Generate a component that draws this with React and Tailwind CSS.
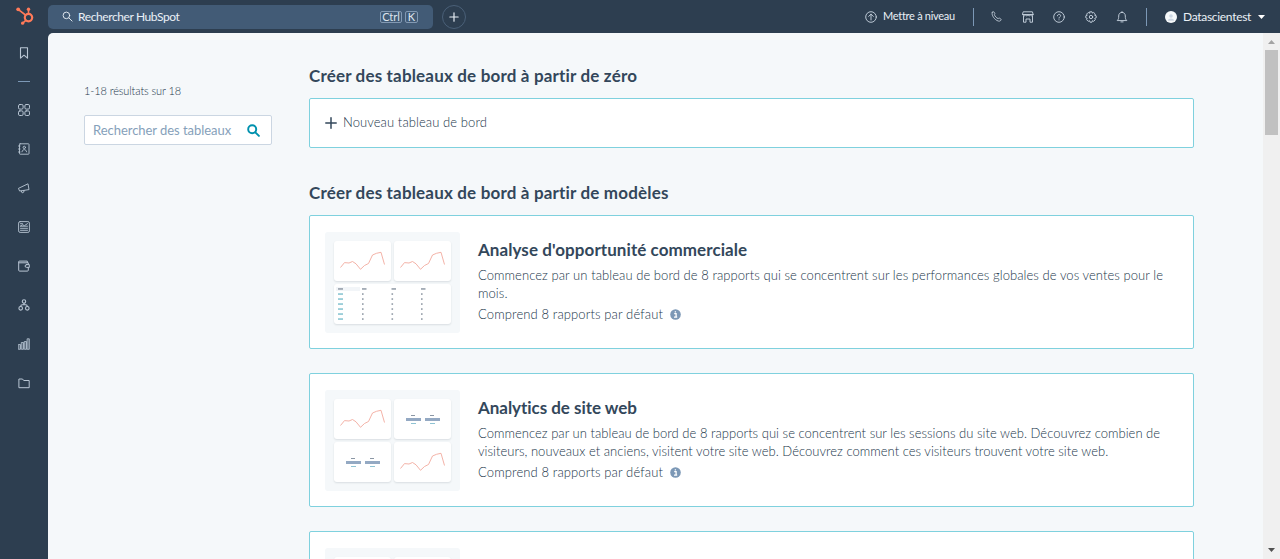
import React from "react";

const SPARK = "M0 15.5 L4 10.6 L8.5 11 L12 9.5 L15.5 11.8 L20 17.3 L24 13.5 L28 11.5 L32 3 L36 1.3 L40.5 0.3 L44 12.5";

function Icon({ children, className = "size-3", viewBox = "0 0 12 12", w = 0.9 }) {
  return (
    <svg viewBox={viewBox} className={`${className} shrink-0`} fill="none" stroke="currentColor" strokeWidth={w} strokeLinecap="round" strokeLinejoin="round">
      {children}
    </svg>
  );
}

const Bookmark = () => <Icon w={1.1}><path d="M2.500.8h7v10.400L6 8.200l-3.500 3z" /></Icon>;
const Grid = () => (
  <Icon w={1}>
    <rect x=".5" y=".5" width="4.600" height="4.600" rx="1.300" /><rect x="6.900" y=".5" width="4.600" height="4.600" rx="1.300" />
    <rect x=".5" y="6.900" width="4.600" height="4.600" rx="1.300" /><rect x="6.900" y="6.900" width="4.600" height="4.600" rx="1.300" />
  </Icon>
);
const Contacts = () => (
  <Icon>
    <rect x="1.500" y=".8" width="9.500" height="10.400" rx=".6" />
    <circle cx="6.300" cy="4.400" r="1.200" /><path d="M4 8.800c.3-3 4.300-3 4.600 0M.5 3h1.500M.5 6h1.500M.5 9h1.500" />
  </Icon>
);
const Megaphone = () => <Icon><path d="M.8 6.200 10 1.800l1 5.800-9 1.400zM3.200 8.900l1 2 1.600-.8.2-1.600" /></Icon>;
const News = () => (
  <Icon>
    <rect x=".6" y=".6" width="10.800" height="10.800" rx="1.500" />
    <path d="M2.500 2.700h2M2.500 5l2-1.200 2 .8 3-2M2.500 5.200h7M2.500 7.300h7M2.500 9.300h7" />
  </Icon>
);
const Wallet = () => (
  <Icon w={1}>
    <path d="M10.300 4.200V2.800H1.500c-1 0-1-1.700 0-1.700h7.800v1.500M.7 2v8.200c0 .6.3.9.9.9h7.800c.6 0 .9-.3.9-.9V8M8.500 4.600h2.800v2.800H8.500a1.400 1.400 0 0 1 0-2.800z" />
  </Icon>
);
const Nodes = () => (
  <Icon w={1.1}>
    <circle cx="6" cy="2.500" r="1.700" /><circle cx="2.700" cy="9.300" r="1.800" /><circle cx="9.300" cy="9.300" r="1.800" />
    <path d="M6 4.200v1.500M2.700 7.500c0-1.200.6-1.800 1.600-1.800h3.400c1 0 1.600.6 1.600 1.800" />
  </Icon>
);
const Bars = () => (
  <Icon w={0.8}>
    <g fill="currentColor" fillOpacity=".35">
      <rect x=".7" y="6.500" width="1.800" height="4.800" /><rect x="3.700" y="4.500" width="1.800" height="6.800" />
      <rect x="6.700" y="3.500" width="1.800" height="7.800" /><rect x="9.500" y=".8" width="1.800" height="10.500" />
    </g>
  </Icon>
);
const Folder = () => <Icon w={1}><path d="M.9 10.300V2h3.600l1.200 1.500h5.500v6.800z" /></Icon>;

const NAV = [Grid, Contacts, Megaphone, News, Wallet, Nodes, Bars, Folder];

function Sprocket() {
  return (
    <svg viewBox="0 0 18 18" className="ml-[2px] size-[18px]" fill="none" stroke="#ff7a59" strokeLinecap="round">
      <circle cx="12.500" cy="10.600" r="3.700" strokeWidth="2.200" />
      <path d="M12.500 6.500V2.800M9.500 8 2.800 2.800M9.800 13.300l-3 2.800" strokeWidth="1.600" />
      <g fill="#ff7a59" stroke="none">
        <circle cx="12.500" cy="2.200" r="1.700" /><circle cx="2.200" cy="2.300" r="1.900" /><circle cx="6.600" cy="16.200" r="1.600" />
      </g>
    </svg>
  );
}

function Kbd({ children, className }) {
  return (
    <span className={`flex h-3 items-center justify-center rounded-xs border border-[#8299b3] text-[11px] leading-none text-[#dfe6ee] ${className}`}>
      {children}
    </span>
  );
}

function Header() {
  return (
    <header className="flex h-[33px] shrink-0 items-center text-[#eaf0f6]">
      <div className="flex w-12 justify-center pb-px"><Sprocket /></div>
      <div className="flex h-6 w-[385px] items-center rounded-[5px] bg-[#425b76] pr-[15px] pl-3.5">
        <Icon className="size-[11px]" w={1}><circle cx="4.800" cy="4.800" r="3.600" /><path d="m7.600 7.600 3.400 3.400" /></Icon>
        <span className="ml-[5px] flex-1 text-xs tracking-[-0.400px] whitespace-nowrap">Rechercher HubSpot</span>
        <Kbd className="w-[22px]">Ctrl</Kbd>
        <Kbd className="ml-[3px] w-[13px]">K</Kbd>
      </div>
      <div className="ml-[9px] flex size-6 items-center justify-center rounded-full border border-[#4a6078]">
        <Icon className="size-[10px]" w={1.4}><path d="M6 1v10M1 6h10" /></Icon>
      </div>
      <div className="ml-auto flex items-center text-[#cbd6e2]">
        <Icon><circle cx="6" cy="6" r="5.300" /><path d="M6 9V3.200M3.700 5.400 6 3.100l2.300 2.300" /></Icon>
        <span className="ml-1.5 w-[72px] text-[11px] tracking-[-0.280px] whitespace-nowrap text-[#eaf0f6]">Mettre à niveau</span>
        <span className="ml-[18px] h-[18px] w-px bg-[#7c98b6]" />
        <div className="ml-[17px] flex items-center gap-[19.500px]">
          <Icon className="size-[11px]"><path d="M1.500 1.300c1-.8 1.800-.5 2.300.5.500 1 .6 1.300-.2 2.200.8 1.800 2.200 3.400 4.200 4.400.9-.9 1.500-.7 2.400-.1.900.6 1.200 1.200.3 2.100-1.300 1.300-3.500.6-5.700-1.200C2.300 7 .2 3.300 1.500 1.300z" /></Icon>
          <Icon><path d="M1.600.8h8.800l.8 2.700H.8zM.8 3.500c0 1.800 2.400 1.800 2.600.2.300 1.500 2.400 1.500 2.600 0 .2 1.500 2.300 1.500 2.600 0 .2 1.600 2.600 1.600 2.600-.2M1.500 5.200v6h2.500V8h4v3.200h2.500v-6" /></Icon>
          <Icon><circle cx="6" cy="6" r="5.300" /><path d="M4.400 4.800c0-2 3.200-2 3.200-.1C7.600 5.800 6 5.800 6 7.100M6 8.800v.1" /></Icon>
          <Icon>
            <path d="m5 .8h2l.4 1.300 1.300-.6 1.600 1.600-.6 1.200 1.500.5v2l-1.500.6.6 1.300-1.600 1.600-1.300-.6L7 11.200H5l-.5-1.500-1.300.6-1.600-1.600.6-1.300L.8 6.800v-2l1.400-.5-.6-1.200 1.600-1.600 1.300.6z" />
            <circle cx="6" cy="6" r="1.700" />
          </Icon>
          <Icon><path d="M1.500 9.300c1-1 1.200-2 1.200-4.300C2.700 2.700 4.200 1.400 6 1.400S9.300 2.700 9.300 5c0 2.300.2 3.300 1.200 4.300zM6 .6v.8M4.900 10.900h2.200" /></Icon>
        </div>
        <span className="ml-[18px] h-[18px] w-px bg-[#7c98b6]" />
        <svg viewBox="0 0 12 12" className="ml-[18px] size-3"><circle cx="6" cy="6" r="6" fill="#f5f8fa" /><circle cx="6" cy="5" r="1.800" fill="#cbd6e2" /><path d="M2.800 9.800c.6-3 5.800-3 6.400 0z" fill="#cbd6e2" /></svg>
        <span className="ml-1.5 w-[69px] text-xs tracking-[-0.300px] whitespace-nowrap text-[#eaf0f6]">Datascientest</span>
        <svg viewBox="0 0 6 4" className="mr-[15px] ml-1.5 h-1 w-[7px] text-white" preserveAspectRatio="none"><path d="M0 0h6L3 4z" fill="currentColor" /></svg>
      </div>
    </header>
  );
}

function Rail() {
  return (
    <nav className="flex w-12 shrink-0 flex-col items-center pt-3.5 text-[#b9c6d4]">
      <Bookmark />
      <span className="mt-[22px] h-px w-3 bg-[#7c98b6]" />
      <div className="mt-[22px] flex flex-col gap-[27px]">
        {NAV.map((Item, i) => <Item key={i} />)}
      </div>
    </nav>
  );
}

function Tile({ children, className = "w-[57px]" }) {
  return <div className={`flex h-10 rounded-[3px] bg-white shadow-[0_1px_2px_rgba(45,62,80,0.14)] ${className}`}>{children}</div>;
}

function LineTile() {
  return (
    <Tile>
      <svg viewBox="0 0 57 40" className="h-10 w-[57px]"><path d={SPARK} transform="translate(6.500 11)" fill="none" stroke="#f2a99d" strokeWidth=".9" /></svg>
    </Tile>
  );
}

function StatTile() {
  return (
    <Tile className="w-[57px] items-center justify-center gap-1">
      {[0, 1].map((i) => (
        <div key={i} className="flex flex-col items-center gap-0.5">
          <span className="h-px w-1 bg-[#8b97a5]" />
          <span className="h-[3px] w-[15px] bg-[#94a9c3]" />
          <span className="h-px w-[5px] bg-[#8fc3d3]" />
        </div>
      ))}
    </Tile>
  );
}

function TableTile() {
  return (
    <Tile className="w-[117px]">
      <svg viewBox="0 0 117 40" className="h-10 w-[117px]">
        <rect x="2" y="3" width="24" height="4" fill="#f2f5f8" />
        {[4, 28, 57.500, 87].map((x) => <rect key={x} x={x} y="4.200" width={x === 4 ? 5 : 4.500} height="1.500" fill="#909aa6" />)}
        {[0, 1, 2, 3, 4, 5].map((r) => (
          <g key={r}>
            <rect x="4" y={9.3 + r * 5} width="5" height="1.500" fill="#84c3d0" />
            {[28, 57.500, 87].map((x) => <rect key={x} x={x} y={9.3 + r * 5} width="1.600" height="1.500" fill="#8b95a1" />)}
          </g>
        ))}
      </svg>
    </Tile>
  );
}

function Card({ preview, children, className = "h-[134px]" }) {
  return (
    <article className={`flex shrink-0 rounded-xs border border-[#7fd1de] bg-white pt-4 pl-[15px] ${className}`}>
      <div className="flex h-[101px] w-[135px] shrink-0 flex-wrap content-start gap-x-[3px] gap-y-[3px] rounded-[3px] bg-[#f5f8fa] pt-[9px] pl-[9px]">
        {preview}
      </div>
      <div className="ml-[18px] whitespace-nowrap">{children}</div>
    </article>
  );
}

function Included() {
  return (
    <p className="mt-[3px] flex h-[18px] items-center text-[13px] leading-[18px] font-light tracking-[0.120px]">
      <span className="w-[185px]">Comprend 8 rapports par défaut</span>
      <svg viewBox="0 0 11 11" className="ml-[7px] size-[11px]"><circle cx="5.500" cy="5.500" r="5.300" fill="#7c98b6" /><path d="M4.200 4.700h1.900v3M4 8.200h3.200M5.400 2.200v1.300" stroke="#fff" strokeWidth="1.300" fill="none" /></svg>
    </p>
  );
}

function Scrollbar() {
  return (
    <div className="flex w-[17px] shrink-0 flex-col items-center bg-[#f0f0f0]">
      <svg viewBox="0 0 17 17" className="size-[17px]"><path d="M5 11h7L8.500 7z" fill="#a3a3a3" /></svg>
      <div className="h-[85px] w-[13px] bg-[#c1c1c1]" />
      <svg viewBox="0 0 17 17" className="mt-auto size-[17px]"><path d="M5 6h7l-3.500 4z" fill="#505050" /></svg>
    </div>
  );
}

export default function App() {
  return (
    <div className="flex h-[559px] w-[1280px] flex-col overflow-hidden bg-[#2d3e50] font-['Lato',sans-serif]">
      <Header />
      <div className="flex min-h-0 flex-1">
        <Rail />
        <main className="flex min-w-0 flex-1 overflow-hidden rounded-tl-[5px] bg-[#f5f8fa] text-[#22364a]">
          <aside className="w-[261px] shrink-0 pt-[50px] pl-9">
            <p className="text-[11px] leading-4 font-light tracking-[-0.107px] whitespace-nowrap">1-18 résultats sur 18</p>
            <div className="mt-4 flex h-[30px] w-[188px] items-center rounded-xs border border-[#cbd6e2] bg-white pr-[11px] pl-2">
              <span className="flex-1 pt-px text-[13px] tracking-[-0.040px] whitespace-nowrap text-[#869fba]">Rechercher des tableaux</span>
              <Icon className="size-[13px] text-[#0091ae]" w={1.8}><circle cx="4.800" cy="4.800" r="3.700" /><path d="m7.700 7.700 3.300 3.300" /></Icon>
            </div>
          </aside>
          <section className="flex w-[885px] shrink-0 flex-col pt-[31px]">
            <h2 className="text-[17px] leading-6 font-bold tracking-[0.170px] whitespace-nowrap text-[#33475b]">Créer des tableaux de bord à partir de zéro</h2>
            <div className="mt-[10px] flex h-[50px] shrink-0 items-center rounded-xs border border-[#7fd1de] bg-white pl-[15px]">
              <Icon className="size-3 text-[#33475b]" w={1.5}><path d="M6 .8v10.400M.8 6h10.400" /></Icon>
              <span className="ml-[6px] text-[13px] font-light tracking-[0.090px]">Nouveau tableau de bord</span>
            </div>
            <h2 className="mt-[33px] text-[17px] leading-6 font-bold tracking-[0.170px] whitespace-nowrap text-[#33475b]">Créer des tableaux de bord à partir de modèles</h2>
            <div className="mt-[10px] flex flex-col gap-6">
              <Card preview={<><LineTile /><LineTile /><TableTile /></>}>
                <h3 className="mt-[6px] text-[17px] leading-6 font-bold tracking-[0.070px] text-[#33475b]">Analyse d'opportunité commerciale</h3>
                <p className="mt-[4px] text-[13px] leading-[18px] font-light tracking-[0.067px]">
                  Commencez par un tableau de bord de 8 rapports qui se concentrent sur les performances globales de vos ventes pour le<br />mois.
                </p>
                <Included />
              </Card>
              <Card preview={<><LineTile /><StatTile /><StatTile /><LineTile /></>}>
                <h3 className="mt-[6px] text-[17px] leading-6 font-bold tracking-[-0.040px] text-[#33475b]">Analytics de site web</h3>
                <p className="mt-[4px] text-[13px] leading-[18px] font-light tracking-[0.030px]">
                  Commencez par un tableau de bord de 8 rapports qui se concentrent sur les sessions du site web. Découvrez combien de<br />
                  visiteurs, nouveaux et anciens, visitent votre site web. Découvrez comment ces visiteurs trouvent votre site web.
                </p>
                <Included />
              </Card>
              <Card preview={<><LineTile /><LineTile /></>} />
            </div>
          </section>
          <div className="flex-1" />
          <Scrollbar />
        </main>
      </div>
    </div>
  );
}
